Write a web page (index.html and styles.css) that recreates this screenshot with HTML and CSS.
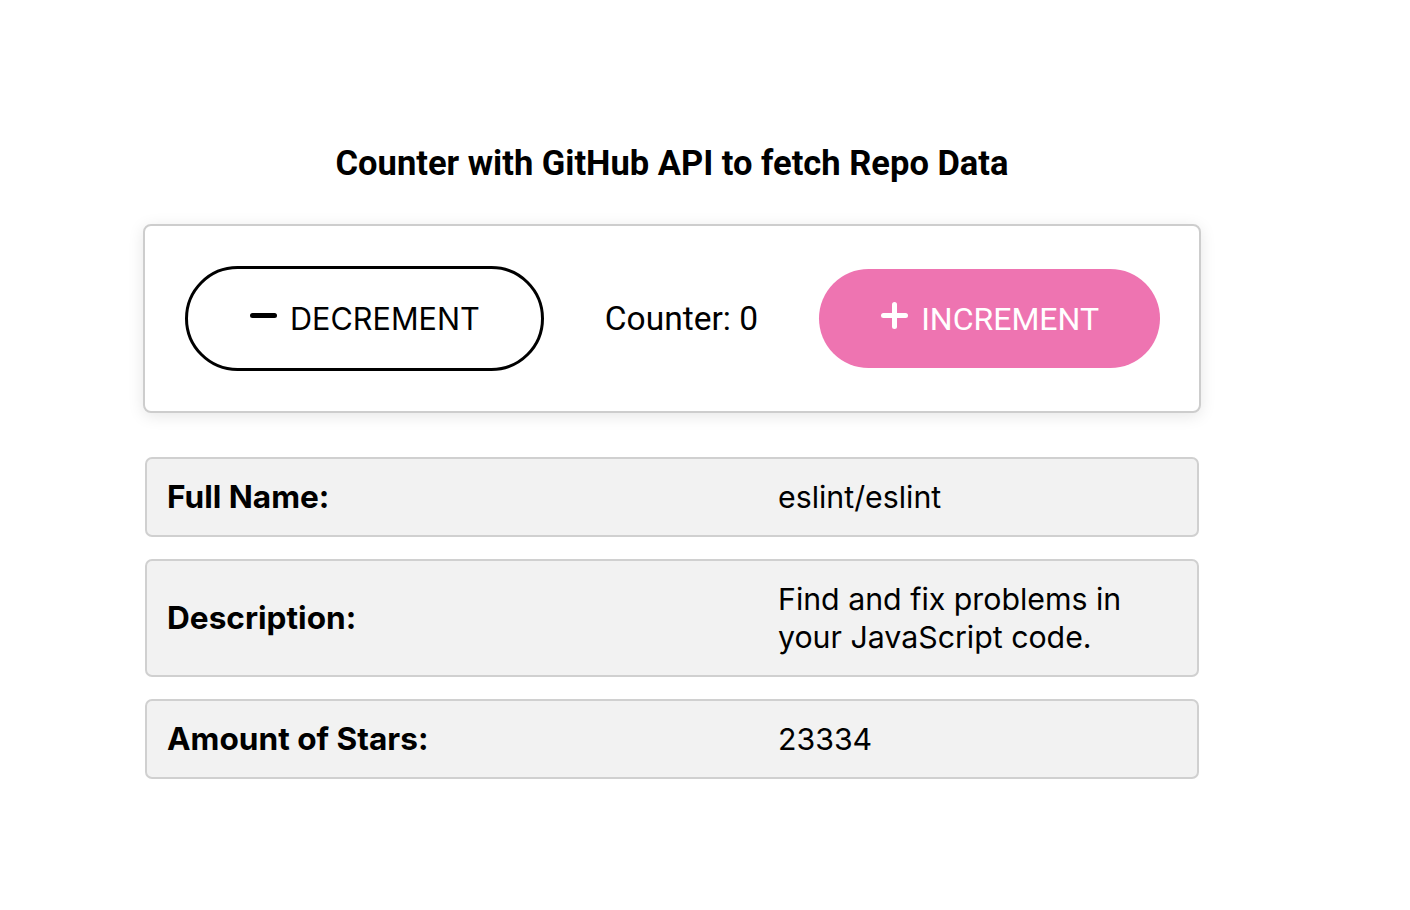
FILE: index.html
```html
<!DOCTYPE html>
<html>
<head>
<meta charset="utf-8">
<link rel="stylesheet" href="styles.css">
</head>
<body>
<main class="app">
  <h1 class="title">Counter with GitHub API to fetch Repo Data</h1>
  <section class="card">
    <button class="btn btn-outline">
      <svg class="icon" width="27" height="27" viewBox="0 0 27 27"><line x1="2.5" y1="13.5" x2="24.5" y2="13.5" stroke="#000" stroke-width="5" stroke-linecap="round"/></svg>
      <span>DECREMENT</span>
    </button>
    <div class="counter">Counter: 0</div>
    <button class="btn btn-pink">
      <svg class="icon" width="27" height="27" viewBox="0 0 27 27"><line x1="2.5" y1="13.5" x2="24.5" y2="13.5" stroke="#fff" stroke-width="5" stroke-linecap="round"/><line x1="13.5" y1="2.5" x2="13.5" y2="24.5" stroke="#fff" stroke-width="5" stroke-linecap="round"/></svg>
      <span>INCREMENT</span>
    </button>
  </section>
  <section class="rows">
    <div class="row"><div class="label">Full Name:</div><div class="value">eslint/eslint</div></div>
    <div class="row"><div class="label">Description:</div><div class="value">Find and fix problems in your JavaScript code.</div></div>
    <div class="row"><div class="label">Amount of Stars:</div><div class="value">23334</div></div>
  </section>
</main>
</body>
</html>
```
FILE: styles.css
```css
html, body {
  margin: 0;
  padding: 0;
  background: #fff;
}
body {
  font-family: Inter, "Liberation Sans", sans-serif;
  color: #000;
}
.app {
  width: 1058px;
  margin-left: 143px;
  padding-top: 142px;
}
.title {
  margin: 0;
  text-align: center;
  font-family: Roboto, "Liberation Sans", sans-serif;
  font-weight: 700;
  font-size: 34.5px;
  line-height: 42px;
}
.card {
  margin-top: 40px;
  box-sizing: border-box;
  height: 189px;
  border: 2px solid #cdcdcd;
  border-radius: 8px;
  box-shadow: 0 3px 16px rgba(0,0,0,0.10);
  padding: 0 39px 0 40px;
  display: flex;
  align-items: center;
  justify-content: space-between;
  background: #fff;
}
.btn {
  display: flex;
  align-items: center;
  gap: 13px;
  height: 99px;
  box-sizing: content-box;
  padding: 0 61px 0 62px;
  border-radius: 60px;
  cursor: pointer;
}
.btn-outline {
  border: 3px solid #000;
  background: #fff;
  color: #000;
  font-family: Inter, "Liberation Sans", sans-serif;
  font-size: 30.6px;
  font-weight: 400;
}
.btn-pink {
  border: none;
  background: #ee74b1;
  color: #fff;
  font-family: Roboto, "Liberation Sans", sans-serif;
  font-size: 32px;
  font-weight: 400;
}
.btn-pink .icon { margin-top: -6px; }
.btn-outline .icon { margin-top: -6px; }
.btn span { line-height: 40px; }
.counter {
  font-family: Roboto, "Liberation Sans", sans-serif;
  font-size: 33.5px;
}
.rows {
  margin: 44px 2px 0;
  display: flex;
  flex-direction: column;
  gap: 22px;
}
.row {
  display: grid;
  grid-template-columns: 611px 1fr;
  align-items: center;
  background: #f2f2f2;
  border: 2px solid #d0d0d0;
  border-radius: 7px;
  padding: 19px 20px;
  font-size: 30px;
  line-height: 38px;
}
.label {
  font-weight: 700;
  font-size: 31.6px;
}
.value {
  font-weight: 400;
  font-size: 30.3px;
}
```
